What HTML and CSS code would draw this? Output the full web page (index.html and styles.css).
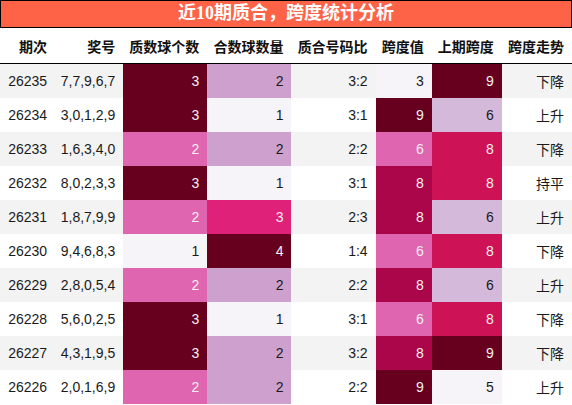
FILE: index.html
```html
<!DOCTYPE html>
<html lang="zh">
<head>
<meta charset="utf-8">
<link rel="stylesheet" href="styles.css">
</head>
<body>
<div class="panel">
  <div class="title">近10期质合，跨度统计分析</div>
  <table class="stats">
    <colgroup>
      <col class="w-issue"><col class="w-nums"><col class="w-mid"><col class="w-mid"><col class="w-mid"><col class="w-span"><col class="w-last"><col class="w-last">
    </colgroup>
    <thead>
      <tr><th>期次</th><th>奖号</th><th>质数球个数</th><th>合数球数量</th><th>质合号码比</th><th>跨度值</th><th>上期跨度</th><th>跨度走势</th></tr>
    </thead>
    <tbody>
      <tr><td>26235</td><td>7,7,9,6,7</td><td class="g7">3</td><td class="g2">2</td><td>3:2</td><td class="g0">3</td><td class="g7">9</td><td class="cjk">下降</td></tr>
      <tr><td>26234</td><td>3,0,1,2,9</td><td class="g7">3</td><td class="g0">1</td><td>3:1</td><td class="g7">9</td><td class="g1">6</td><td class="cjk">上升</td></tr>
      <tr><td>26233</td><td>1,6,3,4,0</td><td class="g3">2</td><td class="g2">2</td><td>2:2</td><td class="g3">6</td><td class="g5">8</td><td class="cjk">下降</td></tr>
      <tr><td>26232</td><td>8,0,2,3,3</td><td class="g7">3</td><td class="g0">1</td><td>3:1</td><td class="g6">8</td><td class="g5">8</td><td class="cjk">持平</td></tr>
      <tr><td>26231</td><td>1,8,7,9,9</td><td class="g3">2</td><td class="g4">3</td><td>2:3</td><td class="g6">8</td><td class="g1">6</td><td class="cjk">上升</td></tr>
      <tr><td>26230</td><td>9,4,6,8,3</td><td class="g0">1</td><td class="g7">4</td><td>1:4</td><td class="g3">6</td><td class="g5">8</td><td class="cjk">下降</td></tr>
      <tr><td>26229</td><td>2,8,0,5,4</td><td class="g3">2</td><td class="g2">2</td><td>2:2</td><td class="g6">8</td><td class="g1">6</td><td class="cjk">上升</td></tr>
      <tr><td>26228</td><td>5,6,0,2,5</td><td class="g7">3</td><td class="g0">1</td><td>3:1</td><td class="g3">6</td><td class="g5">8</td><td class="cjk">下降</td></tr>
      <tr><td>26227</td><td>4,3,1,9,5</td><td class="g7">3</td><td class="g2">2</td><td>3:2</td><td class="g6">8</td><td class="g7">9</td><td class="cjk">下降</td></tr>
      <tr><td>26226</td><td>2,0,1,6,9</td><td class="g3">2</td><td class="g2">2</td><td>2:2</td><td class="g7">9</td><td class="g0">5</td><td class="cjk">上升</td></tr>
    </tbody>
  </table>
</div>
</body>
</html>
```

FILE: styles.css
```css
html, body {
  margin: 0;
  padding: 0;
  background: #ffffff;
}

.panel {
  width: 572px;
}

.title {
  box-sizing: border-box;
  height: 28px;
  border: 1px solid #000;
  background: #ff6347;
  color: #ffffff;
  font-family: "Liberation Serif", "Noto Sans CJK SC", serif;
  font-weight: bold;
  font-size: 18px;
  line-height: 25px;
  text-align: center;
}

.stats {
  width: 572px;
  border-collapse: collapse;
  table-layout: fixed;
  font-family: "Liberation Sans", "Noto Sans CJK SC", sans-serif;
  font-size: 14px;
  color: #1a1a1a;
}

.w-issue { width: 55px; }
.w-nums { width: 68px; }
.w-mid { width: 84px; }
.w-span { width: 56px; }
.w-last { width: 70px; }

.stats th {
  height: 35px;
  padding: 0 8px 0 0;
  text-align: right;
  font-family: "Noto Sans CJK SC", sans-serif;
  font-weight: bold;
  font-size: 14px;
  color: #111;
  border-bottom: 1px solid #000;
  white-space: nowrap;
  vertical-align: middle;
}

.stats td {
  height: 34px;
  padding: 0 8px 0 0;
  text-align: right;
  vertical-align: middle;
  white-space: nowrap;
}

.stats tbody tr:nth-child(odd) {
  background: #f3f3f3;
}

.stats tbody tr:nth-child(even) {
  background: #ffffff;
}

.stats .cjk {
  font-family: "Noto Sans CJK SC", sans-serif;
}

.stats td.g0 { background: #f7f4f9; color: #1a1a1a; }
.stats td.g1 { background: #d4b9da; color: #1a1a1a; }
.stats td.g2 { background: #cda0cd; color: #1a1a1a; }
.stats td.g3 { background: #df65b0; color: #f1f1f1; }
.stats td.g4 { background: #df2179; color: #f1f1f1; }
.stats td.g5 { background: #ce1256; color: #f1f1f1; }
.stats td.g6 { background: #aa0649; color: #f1f1f1; }
.stats td.g7 { background: #67001f; color: #f1f1f1; }
```
